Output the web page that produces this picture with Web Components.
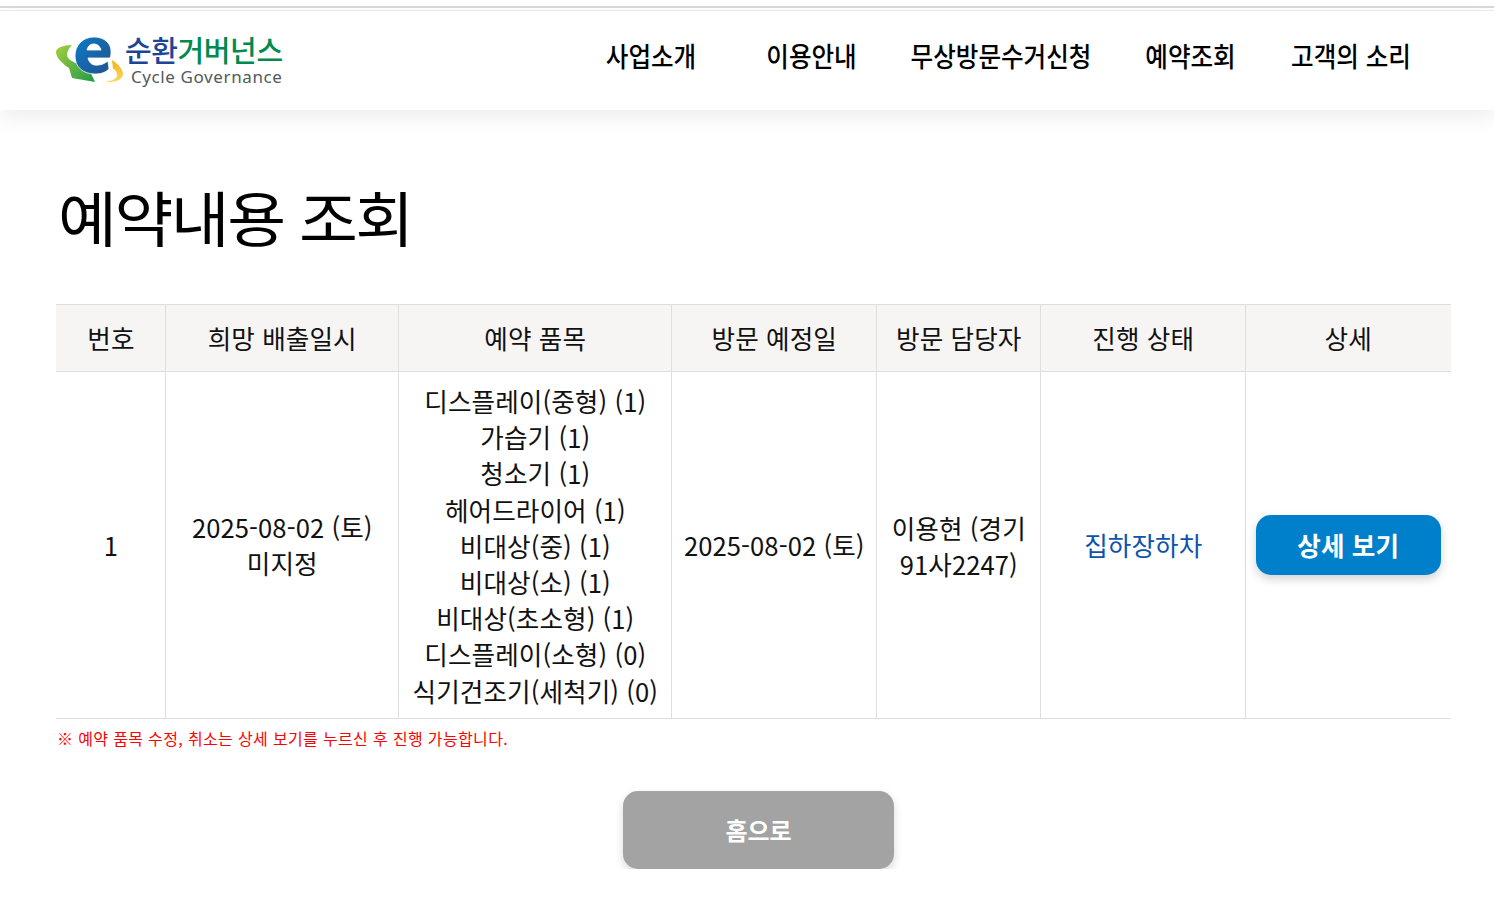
<!DOCTYPE html>
<html lang="ko"><head><meta charset="utf-8"><title>예약내용 조회</title>
<style>
html,body{margin:0;padding:0;background:#fff;color:#000;font-family:"Noto Sans CJK KR","Noto Sans",sans-serif}
</style></head><body>
<top-bar></top-bar>
<site-header></site-header>
<main-area>
  <page-title>예약내용 조회</page-title>
  <reservation-table></reservation-table>
  <note-line>※ 예약 품목 수정, 취소는 상세 보기를 누르신 후 진행 가능합니다.</note-line>
  <home-button>홈으로</home-button>
</main-area>
<script>
function def(name,html){customElements.define(name,class extends HTMLElement{constructor(){super();this.attachShadow({mode:'open'}).innerHTML=html;}});}
const F='"Noto Sans CJK KR","Noto Sans",sans-serif';
def('top-bar',`<style>:host{display:block;height:11px;box-sizing:border-box;background:#fff}
.a{height:6px;background:#fff}.b{height:2px;background:#d9d9d9}.c{height:2px;background:#fff}.d{height:1px;background:#ececec}</style>
<div class="a"></div><div class="b"></div><div class="c"></div><div class="d"></div>`);
def('site-logo',`<style>:host{display:flex;align-items:flex-start;width:232px;height:60px}
svg{display:block;flex:none;width:70px;height:60px}
.t{display:flex;flex-direction:column}
.k{font:500 29px/34px ${F};letter-spacing:-.4px;color:#008a4e;margin-top:-4px;white-space:nowrap;margin-left:-1px}
.k b{font-weight:500;color:#1c4596}
.e{font:400 17px/22px "Noto Sans",sans-serif;letter-spacing:.6px;color:#55585c;margin-left:5px;white-space:nowrap}</style>
<svg viewBox="0 0 70 60"><defs>
<linearGradient id="g" x1="0" y1="0" x2="1" y2="1"><stop offset="0" stop-color="#a4cf3c"/><stop offset="1" stop-color="#1f9a4a"/></linearGradient>
<linearGradient id="y" x1="0" y1="0" x2="0" y2="1"><stop offset="0" stop-color="#f3b310"/><stop offset="1" stop-color="#fdd76b"/></linearGradient>
<linearGradient id="b" x1="0" y1="0" x2="1" y2="1"><stop offset="0" stop-color="#0a7cc6"/><stop offset="1" stop-color="#23508f"/></linearGradient></defs>
<path d="M16 9C7 9 0 12 0 16C0 22 7 28 13 32L16 42L39 46L29 24L24 29C17 26 11 23 11 19C11 15 13 12 16 9Z" fill="url(#g)"/>
<path d="M56 24C62 28 67 33 67 38C67 43 60 47 49 46C55 45 61 43 61 39C61 36 59 33 57 33Z" fill="url(#y)"/>
<path d="M19 20C19 9 27 1 38 1C49 1 55 8 55 15C55 18 55 20 54 22L32 22C33 27 37 30 42 29C46 29 49 27 52 25L53 33C49 37 44 38 39 38C27 38 19 31 19 20ZM31 14L45 14C44 10 41 8 38 8C34 8 32 10 31 14Z" fill="url(#b)" fill-rule="evenodd" stroke="#fff" stroke-width=".8"/>
</svg><div class="t"><div class="k"><b>순환</b>거버넌스</div><div class="e">Cycle Governance</div></div>`);
def('nav-link',`<style>:host{display:flex;justify-content:center;font:500 27px/36px ${F};color:#000;white-space:nowrap;transform:scaleX(.91)}</style><slot></slot>`);
def('site-header',`<style>:host{display:flex;box-sizing:border-box;height:99px;padding:26px 0 0 56px;background:#fff;box-shadow:0 8px 20px rgba(0,0,0,.07);position:relative}
nav{display:grid;grid-template-columns:160px 161px 218px 161px 160px;margin-left:283px;height:36px;margin-top:1px}
site-logo{margin-top:-1px}</style>
<site-logo></site-logo><nav><nav-link>사업소개</nav-link><nav-link>이용안내</nav-link><nav-link>무상방문수거신청</nav-link><nav-link>예약조회</nav-link><nav-link>고객의 소리</nav-link></nav>`);
def('main-area',`<style>:host{display:block;padding:0 43px 0 56px}</style><slot></slot>`);
def('page-title',`<style>:host{display:block;margin-top:68px;height:126px;padding-left:2px;font:400 64px/80px ${F};letter-spacing:-2.5px;color:#000;white-space:nowrap;box-sizing:border-box}
span{display:inline-block;transform:scaleY(.94);transform-origin:0 0}</style><span><slot></slot></span>`);
def('detail-button',`<style>:host{display:flex;align-items:center;justify-content:center;width:185px;height:60px;border-radius:15px;background:#0080cb;color:#fff;font:700 25.6px/36px ${F};box-shadow:0 4px 10px rgba(0,0,0,.18);margin:0 auto 2px}</style><slot></slot>`);
def('reservation-table',`<style>:host{display:block}
table{border-collapse:collapse;table-layout:fixed;width:1395px;font:400 25.6px/36.2px ${F};letter-spacing:.08px;color:#111;text-align:center}
th{height:66px;padding:0 0 0 1.5px;background:#f6f5f3;font-weight:400;border-top:1px solid #dedede;border-bottom:1px solid #dedede;border-left:1px solid #dedede}
td{padding:11px 0 9px 1.5px;border-bottom:1px solid #dedede;border-left:1px solid #dedede;vertical-align:middle}
th:first-child,td:first-child{border-left:0}
th:last-child,td:last-child{padding-left:0}
td.u{padding-bottom:11px}
.s{color:#0d52ad}</style>
<table><colgroup><col style="width:109px"><col style="width:233px"><col style="width:273px"><col style="width:205px"><col style="width:164px"><col style="width:205px"><col style="width:206px"></colgroup>
<thead><tr><th>번호</th><th>희망 배출일시</th><th>예약 품목</th><th>방문 예정일</th><th>방문 담당자</th><th>진행 상태</th><th>상세</th></tr></thead>
<tbody><tr><td class="u">1</td><td class="u">2025-08-02 (토)<br>미지정</td>
<td>디스플레이(중형) (1)<br>가습기 (1)<br>청소기 (1)<br>헤어드라이어 (1)<br>비대상(중) (1)<br>비대상(소) (1)<br>비대상(초소형) (1)<br>디스플레이(소형) (0)<br>식기건조기(세척기) (0)</td>
<td class="u">2025-08-02 (토)</td><td>이용현 (경기<br>91사2247)</td><td class="s u">집하장하차</td><td><detail-button>상세 보기</detail-button></td></tr></tbody></table>`);
def('note-line',`<style>:host{display:block;height:72px;padding:8px 0 0 1px;box-sizing:border-box;font:400 16px/22px ${F};letter-spacing:.35px;color:#f00;white-space:nowrap}</style><slot></slot>`);
def('home-button',`<style>:host{display:flex;align-items:center;justify-content:center;width:271px;height:78px;margin:0 auto 0 567px;border-radius:15px;background:#a3a3a3;color:#fff;font:700 24px/36px ${F};box-shadow:0 4px 10px rgba(0,0,0,.15)}</style><slot></slot>`);
</script>
</body></html>
